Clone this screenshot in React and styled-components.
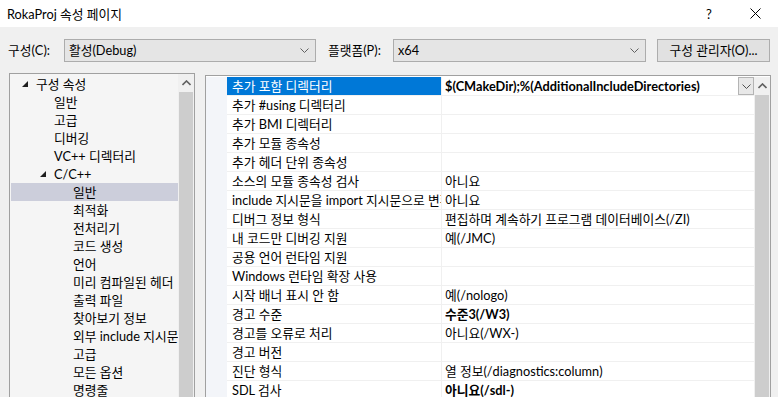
import React from "react";
import styled, { createGlobalStyle } from "styled-components";

const GlobalStyle = createGlobalStyle`
  html, body { margin: 0; padding: 0; background: #f0f0f0; }
  body {
    font-family: "Lato", "Noto Sans CJK KR", sans-serif;
    font-size: 12.75px;
    color: #000;
  }
  * { box-sizing: border-box; }
`;

const Window = styled.div`
  width: 778px;
  height: 397px;
  overflow: hidden;
  display: flex;
  flex-direction: column;
  background: #f0f0f0;
`;

const TitleBar = styled.div`
  height: 27px;
  flex: none;
  background: #fff;
  display: flex;
  align-items: center;
  padding-left: 7px;
`;

const Title = styled.div`
  flex: 1;
  line-height: 16px;
`;

const TitleButton = styled.div`
  width: ${(p) => p.$w}px;
  height: 27px;
  display: flex;
  align-items: center;
  justify-content: center;
  font-size: 13px;
`;

const Toolbar = styled.div`
  height: 46px;
  flex: none;
  display: flex;
  align-items: center;
  padding: 0 8px 0 8px;
`;

const Label = styled.div`
  width: ${(p) => p.$w}px;
  flex: none;
  line-height: 16px;
  white-space: nowrap;
`;

const Combo = styled.div`
  width: ${(p) => p.$w}px;
  height: 23px;
  flex: none;
  margin-right: ${(p) => p.$mr || 0}px;
  background: #e5e5e5;
  border: 1px solid #acacac;
  display: flex;
  align-items: center;
  padding-left: 4px;
  padding-right: 6px;
`;

const ComboText = styled.div`
  flex: 1;
  line-height: 16px;
`;

const Button = styled.div`
  width: 113px;
  height: 23px;
  flex: none;
  background: #e1e1e1;
  border: 1px solid #adadad;
  display: flex;
  align-items: center;
  justify-content: center;
  line-height: 16px;
  white-space: nowrap;
`;

const Body = styled.div`
  flex: 1;
  display: flex;
  align-items: flex-start;
  padding-left: 9px;
  min-height: 0;
`;

const TreePanel = styled.div`
  width: 186px;
  height: 340px;
  flex: none;
  border: 1px solid #a0a0a0;
  border-bottom: none;
  background: #f5f5f5;
  display: flex;
  margin-right: 10px;
`;

const TreeList = styled.div`
  flex: 1;
  padding: 1px 0 0 1px;
  overflow: hidden;
`;

const TreeRow = styled.div`
  height: 18px;
  display: flex;
  align-items: center;
  padding-left: ${(p) => p.$indent}px;
  background: ${(p) => (p.$selected ? "#cccedb" : "transparent")};
  white-space: nowrap;
  overflow: hidden;
  line-height: 16px;
`;

const Arrow = styled.span`
  width: 14px;
  flex: none;
  display: inline-flex;
  align-items: center;
`;

const Scrollbar = styled.div`
  width: ${(p) => p.$w}px;
  flex: none;
  display: flex;
  flex-direction: column;
  background: #f0f0f0;
`;

const ScrollArrow = styled.div`
  height: 18px;
  flex: none;
  display: flex;
  align-items: center;
  justify-content: center;
`;

const Thumb = styled.div`
  flex: 1;
  margin: 0 1px;
  background: #cdcdcd;
`;

const GridPanel = styled.div`
  width: 566px;
  height: 340px;
  flex: none;
  margin-top: 2px;
  border: 1px solid #a0a0a0;
  border-bottom: none;
  background: #fff;
  display: flex;
  padding-top: 1px;
`;

const Gutter = styled.div`
  width: 21px;
  flex: none;
  background: #f3f5f9;
`;

const GridRows = styled.div`
  width: 527px;
  flex: none;
  overflow: hidden;
`;

const GridRow = styled.div`
  height: 19px;
  display: grid;
  grid-template-columns: 214px 1px 1fr;
  border-bottom: 1px solid #f0f0f0;
`;

const NameCell = styled.div`
  padding-left: 5px;
  line-height: 18px;
  white-space: nowrap;
  overflow: hidden;
  background: ${(p) => (p.$selected ? "#0078d7" : "#fff")};
  color: ${(p) => (p.$selected ? "#fff" : "#000")};
`;

const Divider = styled.div`
  background: #f0f0f0;
`;

const ValueCell = styled.div`
  padding-left: 3px;
  display: flex;
  align-items: center;
  line-height: 18px;
  white-space: nowrap;
  overflow: hidden;
  font-weight: ${(p) => (p.$bold ? 700 : 400)};
`;

const ValueText = styled.div`
  flex: 1;
  overflow: hidden;
`;

const DropButton = styled.div`
  width: 16px;
  height: 18px;
  flex: none;
  border: 1px solid #b4b4b4;
  background: #e8e8e8;
  display: flex;
  align-items: center;
  justify-content: center;
`;

const ChevronDown = ({ color = "#606060" }) => (
  <svg width="9" height="5" viewBox="0 0 9 5">
    <polyline points="0.5,0.5 4.5,4.5 8.5,0.5" fill="none" stroke={color} strokeWidth="1" />
  </svg>
);

const ChevronUp = () => (
  <svg width="9" height="6" viewBox="0 0 9 6">
    <polyline points="0.5,5 4.5,1 8.5,5" fill="none" stroke="#606060" strokeWidth="1.6" />
  </svg>
);

const Triangle = () => (
  <svg width="6" height="6" viewBox="0 0 6 6">
    <polygon points="6,0 6,6 0,6" fill="#1e1e1e" />
  </svg>
);

const treeItems = [
  { t: "구성 속성", lvl: 0, open: true },
  { t: "일반", lvl: 1 },
  { t: "고급", lvl: 1 },
  { t: "디버깅", lvl: 1 },
  { t: "VC++ 디렉터리", lvl: 1 },
  { t: "C/C++", lvl: 1, open: true },
  { t: "일반", lvl: 2, sel: true },
  { t: "최적화", lvl: 2 },
  { t: "전처리기", lvl: 2 },
  { t: "코드 생성", lvl: 2 },
  { t: "언어", lvl: 2 },
  { t: "미리 컴파일된 헤더", lvl: 2 },
  { t: "출력 파일", lvl: 2 },
  { t: "찾아보기 정보", lvl: 2 },
  { t: "외부 include 지시문", lvl: 2 },
  { t: "고급", lvl: 2 },
  { t: "모든 옵션", lvl: 2 },
  { t: "명령줄", lvl: 2 },
];

const rows = [
  { n: "추가 포함 디렉터리", v: "$(CMakeDir);%(AdditionalIncludeDirectories)", b: true, sel: true, drop: true },
  { n: "추가 #using 디렉터리", v: "" },
  { n: "추가 BMI 디렉터리", v: "" },
  { n: "추가 모듈 종속성", v: "" },
  { n: "추가 헤더 단위 종속성", v: "" },
  { n: "소스의 모듈 종속성 검사", v: "아니요" },
  { n: "include 지시문을 import 지시문으로 변환", v: "아니요" },
  { n: "디버그 정보 형식", v: "편집하며 계속하기 프로그램 데이터베이스(/ZI)" },
  { n: "내 코드만 디버깅 지원", v: "예(/JMC)" },
  { n: "공용 언어 런타임 지원", v: "" },
  { n: "Windows 런타임 확장 사용", v: "" },
  { n: "시작 배너 표시 안 함", v: "예(/nologo)" },
  { n: "경고 수준", v: "수준3(/W3)", b: true },
  { n: "경고를 오류로 처리", v: "아니요(/WX-)" },
  { n: "경고 버전", v: "" },
  { n: "진단 형식", v: "열 정보(/diagnostics:column)" },
  { n: "SDL 검사", v: "아니요(/sdl-)", b: true },
];

export default function App() {
  return (
    <>
      <GlobalStyle />
      <Window>
        <TitleBar>
          <Title>RokaProj 속성 페이지</Title>
          <TitleButton $w={46}>?</TitleButton>
          <TitleButton $w={46}>
            <svg width="11" height="11" viewBox="0 0 11 11">
              <path d="M0.5 0.5 L10.5 10.5 M10.5 0.5 L0.5 10.5" stroke="#000" strokeWidth="1" />
            </svg>
          </TitleButton>
        </TitleBar>
        <Toolbar>
          <Label $w={56}>구성(C):</Label>
          <Combo $w={252} $mr={12}>
            <ComboText>활성(Debug)</ComboText>
            <ChevronDown />
          </Combo>
          <Label $w={65}>플랫폼(P):</Label>
          <Combo $w={253} $mr={11}>
            <ComboText>x64</ComboText>
            <ChevronDown />
          </Combo>
          <Button>구성 관리자(O)...</Button>
        </Toolbar>
        <Body>
          <TreePanel>
            <TreeList>
              {treeItems.map((it, i) => (
                <TreeRow key={i} $indent={it.lvl === 0 ? 11 : it.lvl === 1 ? (it.open ? 29 : 43) : 62} $selected={it.sel}>
                  {it.open && (
                    <Arrow>
                      <Triangle />
                    </Arrow>
                  )}
                  {it.t}
                </TreeRow>
              ))}
            </TreeList>
            <Scrollbar $w={16}>
              <ScrollArrow>
                <ChevronUp />
              </ScrollArrow>
              <Thumb />
            </Scrollbar>
          </TreePanel>
          <GridPanel>
            <Gutter />
            <GridRows>
              {rows.map((r, i) => (
                <GridRow key={i}>
                  <NameCell $selected={r.sel}>{r.n}</NameCell>
                  <Divider />
                  <ValueCell $bold={r.b}>
                    <ValueText>{r.v}</ValueText>
                    {r.drop && (
                      <DropButton>
                        <ChevronDown color="#505050" />
                      </DropButton>
                    )}
                  </ValueCell>
                </GridRow>
              ))}
            </GridRows>
            <Scrollbar $w={16}>
              <ScrollArrow>
                <ChevronUp />
              </ScrollArrow>
              <Thumb />
            </Scrollbar>
          </GridPanel>
        </Body>
      </Window>
    </>
  );
}
